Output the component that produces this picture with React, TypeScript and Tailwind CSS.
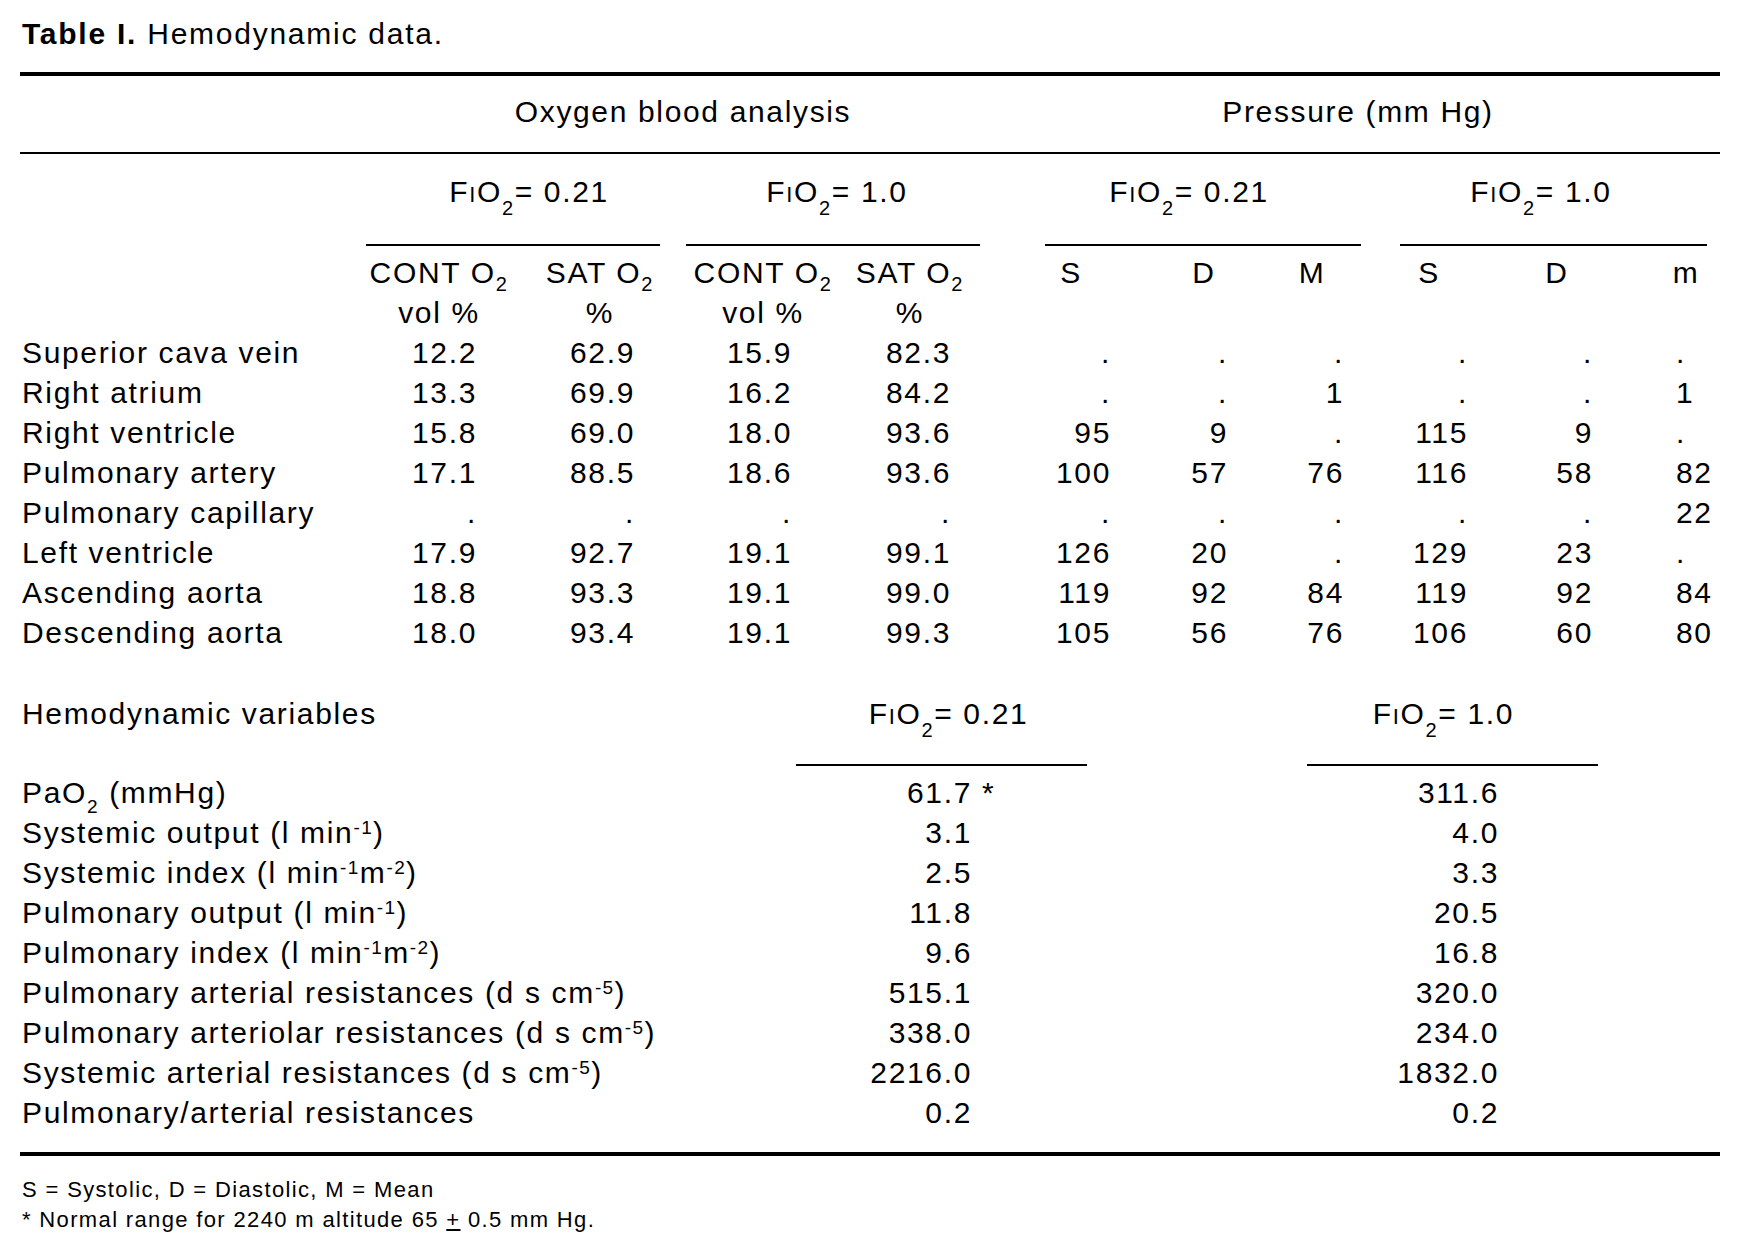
import React from "react";

const TOP =
  "grid h-[40px] grid-cols-[348px_142px_180px_146px_148px_174px_92px_124px_110px_146px_90px] leading-[40px]";
const BOTTOM = "grid h-[40px] grid-cols-[776px_291px_220px_291px] leading-[40px]";

const valCls = [
  "pr-[33px] text-right",
  "pr-[55px] text-right",
  "pr-[44px] text-right",
  "pr-[33px] text-right",
  "pr-[47px] text-right",
  "pr-[22px] text-right",
  "pr-[30px] text-right",
  "pr-[16px] text-right",
  "pr-[37px] text-right",
  "pl-[46px] text-left",
];

const blood = [
  ["Superior cava vein", "12.2", "62.9", "15.9", "82.3", ".", ".", ".", ".", ".", "."],
  ["Right atrium", "13.3", "69.9", "16.2", "84.2", ".", ".", "1", ".", ".", "1"],
  ["Right ventricle", "15.8", "69.0", "18.0", "93.6", "95", "9", ".", "115", "9", "."],
  ["Pulmonary artery", "17.1", "88.5", "18.6", "93.6", "100", "57", "76", "116", "58", "82"],
  ["Pulmonary capillary", ".", ".", ".", ".", ".", ".", ".", ".", ".", "22"],
  ["Left ventricle", "17.9", "92.7", "19.1", "99.1", "126", "20", ".", "129", "23", "."],
  ["Ascending aorta", "18.8", "93.3", "19.1", "99.0", "119", "92", "84", "119", "92", "84"],
  ["Descending aorta", "18.0", "93.4", "19.1", "99.3", "105", "56", "76", "106", "60", "80"],
];

const Sub = ({ children }: { children: React.ReactNode }) => (
  <span className="align-[-8px] text-[20px] leading-none">{children}</span>
);

const SubLow = ({ children }: { children: React.ReactNode }) => (
  <span className="align-[-13px] text-[20px] leading-none">{children}</span>
);

const SubPa = ({ children }: { children: React.ReactNode }) => (
  <span className="align-[-10px] text-[19px] leading-none">{children}</span>
);

const Sup = ({ children }: { children: React.ReactNode }) => (
  <span className="align-[9px] text-[19px] tracking-[1.4px] leading-none">{children}</span>
);

const FiO2 = ({ v }: { v: string }) => (
  <span>
    F<span className="text-[22px]">I</span>O<SubLow>2</SubLow>= {v}
  </span>
);

const variables: [React.ReactNode, React.ReactNode, string][] = [
  [
    <>
      PaO<SubPa>2</SubPa> (mmHg)
    </>,
    <>
      61.7
      <span className="inline-block w-0 whitespace-nowrap">&nbsp;*</span>
    </>,
    "311.6",
  ],
  [
    <>
      Systemic output (l min<Sup>-1</Sup>)
    </>,
    "3.1",
    "4.0",
  ],
  [
    <>
      Systemic index (l min<Sup>-1</Sup>m<Sup>-2</Sup>)
    </>,
    "2.5",
    "3.3",
  ],
  [
    <>
      Pulmonary output (l min<Sup>-1</Sup>)
    </>,
    "11.8",
    "20.5",
  ],
  [
    <>
      Pulmonary index (l min<Sup>-1</Sup>m<Sup>-2</Sup>)
    </>,
    "9.6",
    "16.8",
  ],
  [
    <>
      Pulmonary arterial resistances (d s cm<Sup>-5</Sup>)
    </>,
    "515.1",
    "320.0",
  ],
  [
    <>
      Pulmonary arteriolar resistances (d s cm<Sup>-5</Sup>)
    </>,
    "338.0",
    "234.0",
  ],
  [
    <>
      Systemic arterial resistances (d s cm<Sup>-5</Sup>)
    </>,
    "2216.0",
    "1832.0",
  ],
  ["Pulmonary/arterial resistances", "0.2", "0.2"],
];

export default function App() {
  return (
    <div className="min-h-[1252px] w-[1738px] bg-white pl-[20px] pt-[14px] font-['Liberation_Sans',Arial,sans-serif] text-[30px] tracking-[1.65px] text-black">
      <div className="w-[1700px]">
        <div className="h-[40px] whitespace-nowrap pl-[2px] tracking-[1.75px] leading-[40px]">
          <span className="font-bold">Table I.</span> Hemodynamic data.
        </div>
        <div className="mt-[18px] h-[4px] bg-black" />

        {/* group titles */}
        <div className={TOP + " mt-[16px]"}>
          <div />
          <div className="col-span-4 pl-[14px] text-center">Oxygen blood analysis</div>
          <div className="col-span-6 pl-[12px] text-center">Pressure (mm Hg)</div>
        </div>
        <div className="mt-[20px] h-[2px] bg-black" />

        <div className={TOP + " mt-[18px]"}>
          <div />
          <div className="col-span-2 text-center">
            <FiO2 v="0.21" />
          </div>
          <div className="col-span-2 text-center">
            <FiO2 v="1.0" />
          </div>
          <div className="col-span-3 pl-[20px] text-center">
            <FiO2 v="0.21" />
          </div>
          <div className="col-span-3 pr-[12px] text-center">
            <FiO2 v="1.0" />
          </div>
        </div>

        <div className="mt-[32px] grid h-[2px] grid-cols-[348px_322px_294px_390px_346px]">
          <div />
          <div className="ml-[-2px] mr-[30px] bg-black" />
          <div className="ml-[-4px] mr-[4px] bg-black" />
          <div className="ml-[61px] mr-[13px] bg-black" />
          <div className="ml-[26px] mr-[13px] bg-black" />
        </div>

        <div className={TOP + " mt-[7px] whitespace-nowrap text-center"}>
          <div />
          <div>
            CONT O<Sub>2</Sub>
          </div>
          <div>
            SAT O<Sub>2</Sub>
          </div>
          <div>
            CONT O<Sub>2</Sub>
          </div>
          <div>
            SAT O<Sub>2</Sub>
          </div>
          <div>S</div>
          <div>D</div>
          <div>M</div>
          <div>S</div>
          <div>D</div>
          <div className="pl-[22px]">m</div>
        </div>
        <div className={TOP + " text-center"}>
          <div />
          <div>vol %</div>
          <div>%</div>
          <div>vol %</div>
          <div>%</div>
        </div>

        {blood.map((r) => (
          <div key={r[0]} className={TOP + " whitespace-nowrap"}>
            <div className="pl-[2px]">{r[0]}</div>
            {r.slice(1).map((v, i) => (
              <div key={i} className={valCls[i]}>
                {v}
              </div>
            ))}
          </div>
        ))}

        {/* hemodynamic variables */}
        <div className={BOTTOM + " mt-[41px] whitespace-nowrap"}>
          <div className="pl-[2px]">Hemodynamic variables</div>
          <div className="pl-[14px] text-center">
            <FiO2 v="0.21" />
          </div>
          <div />
          <div className="pr-[18px] text-center">
            <FiO2 v="1.0" />
          </div>
        </div>
        <div className="mt-[30px] grid h-[2px] grid-cols-[776px_291px_220px_291px]">
          <div />
          <div className="bg-black" />
          <div />
          <div className="bg-black" />
        </div>

        <div className="mt-[7px]">
          {variables.map((r, i) => (
            <div key={i} className={BOTTOM + " whitespace-nowrap"}>
              <div className="pl-[2px]">{r[0]}</div>
              <div className="pr-[115px] text-right">{r[1]}</div>
              <div />
              <div className="pr-[99px] text-right">{r[2]}</div>
            </div>
          ))}
        </div>

        <div className="mt-[19px] h-[4px] bg-black" />

        <div className="mt-[19px] pl-[2px] text-[22px] tracking-[1.35px] leading-[30px]">
          <div>S = Systolic, D = Diastolic, M = Mean</div>
          <div>
            * Normal range for 2240 m altitude 65 <span className="underline">+</span> 0.5 mm Hg.
          </div>
        </div>
      </div>
    </div>
  );
}
